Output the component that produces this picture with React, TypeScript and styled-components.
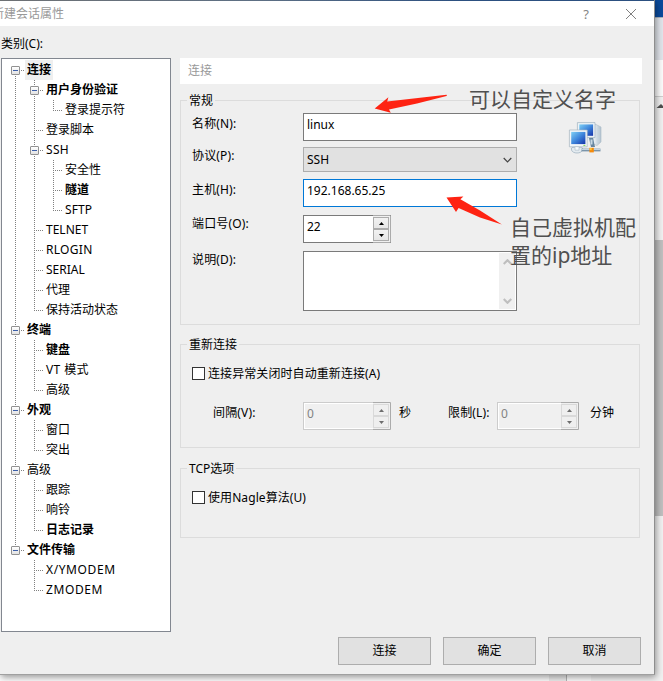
import React from "react";
import styled, { createGlobalStyle, css } from "styled-components";

const Global = createGlobalStyle`
  * { box-sizing: border-box; }
  body {
    margin: 0;
    overflow: hidden;
    background: #efefef;
    color: #000;
    font: 12px/16px "Noto Sans", "Noto Sans CJK SC", sans-serif;
  }
`;

/* ---------- desktop behind the dialog ---------- */

const Desktop = styled.div`
  position: relative;
  display: grid;
  grid-template: 675px 6px / 655px 8px;
  width: 663px;
  height: 681px;
  overflow: hidden;
`;

const SideStrip = styled.div`
  display: flex;
  flex-direction: column;
  grid-row: 1 / 3;
  grid-column: 2;
`;

const SideBlock = styled.div<{ $h: number; $bg: string; $line?: string }>`
  height: ${(p) => p.$h}px;
  background: ${(p) => p.$bg};
  border-bottom: ${(p) => (p.$line ? `1px solid ${p.$line}` : "none")};
`;

const BottomStrip = styled.div`
  display: flex;
  grid-row: 2;
  grid-column: 1;
`;

const BottomBlock = styled.div<{ $w: number; $bg: string }>`
  width: ${(p) => p.$w}px;
  background: ${(p) => p.$bg};
`;

/* ---------- dialog frame ---------- */

const Dialog = styled.div`
  z-index: 1;
  display: flex;
  flex-direction: column;
  grid-row: 1;
  grid-column: 1;
  background: #efefef;
  border-right: 1px solid #8e8e8e;
  border-bottom: 1px solid #a0a0a0;
  box-shadow: 1px 2px 7px rgba(0, 0, 0, 0.42);
`;

const TopEdge = styled.div`
  height: 1px;
  background: linear-gradient(90deg, #6e7174, #5d6f84 40%, #2c5080 70%, #2c5080);
`;

const TitleBar = styled.div`
  display: flex;
  align-items: center;
  height: 25px;
  background: #fff;
  color: #999;
`;

const Title = styled.span`
  flex: 1;
  margin-left: -8px;
  white-space: nowrap;
`;

const TitleButtons = styled.div`
  display: flex;
  align-items: center;
  gap: 35px;
  padding-right: 17px;
`;

const HelpMark = styled.span`
  width: 8px;
  font-size: 13px;
  color: #848484;
  text-align: center;
`;

const Body = styled.div`
  display: flex;
  height: 606px;
`;

const Footer = styled.div`
  display: flex;
  gap: 12px;
  justify-content: flex-end;
  padding: 5px 13px 0 0;
`;

const Button = styled.button`
  width: 93px;
  height: 28px;
  padding: 0;
  border: 1px solid #adadad;
  background: #e1e1e1;
  color: #000;
  font: inherit;
`;

/* ---------- category tree ---------- */

const Sidebar = styled.div`
  width: 180px;
  padding: 10px 0 0 1px;
`;

const TreeBox = styled.div`
  width: 170px;
  height: 574px;
  margin-top: 6px;
  padding: 1px 0 0 4px;
  border: 1px solid #828790;
  background: #fff;
`;

const TreeRow = styled.div`
  display: flex;
  height: 20px;
`;

type Guide = "none" | "pass" | "tee" | "end" | "start";

const vDots = "repeating-linear-gradient(180deg, #808080 0 1px, transparent 1px 2px)";
const hDots = "repeating-linear-gradient(90deg, #808080 0 1px, transparent 1px 2px)";

const guideStyles: Record<Guide, ReturnType<typeof css> | null> = {
  none: null,
  pass: css`background: ${vDots} 9px 0 / 1px 20px no-repeat;`,
  tee: css`background: ${vDots} 9px 0 / 1px 20px no-repeat, ${hDots} 9px 10px / 9px 1px no-repeat;`,
  end: css`background: ${vDots} 9px 0 / 1px 11px no-repeat, ${hDots} 9px 10px / 9px 1px no-repeat;`,
  start: css`background: ${vDots} 9px 10px / 1px 10px no-repeat, ${hDots} 9px 10px / 9px 1px no-repeat;`,
};

const GuideCell = styled.span<{ $kind: Guide }>`
  width: 19px;
  height: 20px;
  padding: 6px 0 0 5px;
  ${(p) => guideStyles[p.$kind]}
`;

const Expander = styled.span`
  display: flex;
  align-items: center;
  justify-content: center;
  width: 9px;
  height: 9px;
  border: 1px solid #919191;
  border-radius: 1px;
  background: linear-gradient(#fff, #e2e2e2);

  &::before {
    content: "";
    width: 5px;
    height: 1px;
    background: #3c5fa8;
  }
`;

const TreeLabel = styled.span<{ $bold?: boolean; $selected?: boolean; $spacing?: number }>`
  padding: 0 2px;
  line-height: 19px;
  white-space: nowrap;
  letter-spacing: ${(p) => p.$spacing ?? 0}px;
  font-weight: ${(p) => (p.$bold ? 700 : 400)};
  background: ${(p) => (p.$selected ? "#efefef" : "transparent")};
`;

interface Node {
  text: string;
  guides: Guide[];
  open?: boolean;
  bold?: boolean;
  selected?: boolean;
  spacing?: number;
}

const nodes: Node[] = [
  { text: "连接", guides: ["start"], open: true, bold: true, selected: true },
  { text: "用户身份验证", guides: ["pass", "tee"], open: true, bold: true },
  { text: "登录提示符", guides: ["pass", "pass", "end"] },
  { text: "登录脚本", guides: ["pass", "tee"] },
  { text: "SSH", guides: ["pass", "tee"], open: true, spacing: 0.3 },
  { text: "安全性", guides: ["pass", "pass", "tee"] },
  { text: "隧道", guides: ["pass", "pass", "tee"], bold: true },
  { text: "SFTP", guides: ["pass", "pass", "end"], spacing: 0.1 },
  { text: "TELNET", guides: ["pass", "tee"] },
  { text: "RLOGIN", guides: ["pass", "tee"], spacing: 0.3 },
  { text: "SERIAL", guides: ["pass", "tee"] },
  { text: "代理", guides: ["pass", "tee"] },
  { text: "保持活动状态", guides: ["pass", "end"] },
  { text: "终端", guides: ["tee"], open: true, bold: true },
  { text: "键盘", guides: ["pass", "tee"], bold: true },
  { text: "VT 模式", guides: ["pass", "tee"], spacing: 0.4 },
  { text: "高级", guides: ["pass", "end"] },
  { text: "外观", guides: ["tee"], open: true, bold: true },
  { text: "窗口", guides: ["pass", "tee"] },
  { text: "突出", guides: ["pass", "end"] },
  { text: "高级", guides: ["tee"], open: true },
  { text: "跟踪", guides: ["pass", "tee"] },
  { text: "响铃", guides: ["pass", "tee"] },
  { text: "日志记录", guides: ["pass", "end"], bold: true },
  { text: "文件传输", guides: ["end"], open: true, bold: true },
  { text: "X/YMODEM", guides: ["none", "tee"], spacing: 0.6 },
  { text: "ZMODEM", guides: ["none", "end"], spacing: 0.6 },
];

/* ---------- settings panel ---------- */

const Panel = styled.div`
  width: 462px;
  padding-top: 32px;
`;

const PanelHeader = styled.div`
  height: 26px;
  padding: 5px 8px;
  background: #fff;
  color: #999;
`;

const Group = styled.section<{ $h: number; $top: number }>`
  width: 460px;
  height: ${(p) => p.$h}px;
  margin-top: ${(p) => p.$top}px;
  padding-left: 11px;
  border: 1px solid #dcdcdc;
`;

const Legend = styled.h2`
  width: fit-content;
  height: 16px;
  margin: -8px 0 0 -5px;
  padding: 0 2px;
  background: #efefef;
  font: inherit;
`;

const Field = styled.div<{ $top: number }>`
  display: flex;
  margin-top: ${(p) => p.$top}px;
`;

const Label = styled.label<{ $w: number; $top?: number; $indent?: number }>`
  width: ${(p) => p.$w}px;
  padding: ${(p) => p.$top ?? 3}px 0 0 ${(p) => p.$indent ?? 0}px;
  white-space: nowrap;
  letter-spacing: 0.15px;
`;

const TextBox = styled.div<{ $focus?: boolean }>`
  width: 214px;
  height: 28px;
  padding: 3px 3px;
  border: 1px solid ${(p) => (p.$focus ? "#0078d7" : "#7a7a7a")};
  background: #fff;
`;

const Combo = styled.div`
  display: flex;
  align-items: center;
  justify-content: space-between;
  width: 214px;
  height: 25px;
  padding: 0 4px 0 3px;
  border: 1px solid #adadad;
  background: #e1e1e1;
`;

const TextArea = styled.div`
  display: flex;
  justify-content: flex-end;
  width: 214px;
  height: 60px;
  padding: 1px;
  border: 1px solid #7a7a7a;
  background: #fff;
`;

const ScrollTrack = styled.div`
  display: flex;
  flex-direction: column;
  align-items: center;
  justify-content: space-between;
  width: 16px;
  padding: 6px 0 5px;
  background: #f0f0f0;
`;

const SpinBox = styled.div<{ $w: number; $disabled?: boolean }>`
  display: flex;
  justify-content: space-between;
  width: ${(p) => p.$w}px;
  height: 28px;
  border: 1px solid ${(p) => (p.$disabled ? "#cccccc" : "#7a7a7a")};
  border-right-color: #ababab;
  background: ${(p) => (p.$disabled ? "#f0f0f0" : "#fff")};
  color: ${(p) => (p.$disabled ? "#838383" : "#000")};
  box-shadow: ${(p) => (p.$disabled ? "inset 0 0 0 1px #fff" : "none")};
`;

const SpinValue = styled.span`
  padding: 3px;
`;

const SpinButtons = styled.div`
  display: flex;
  flex-direction: column;
  width: 17px;
  margin: -1px 0;
  padding: 1px 1px 1px 0;
  border: solid #ababab;
  border-width: 1px 0;
  background: #f0f0f0;
`;

const SpinButton = styled.div<{ $disabled?: boolean }>`
  display: flex;
  flex: 1;
  align-items: center;
  justify-content: center;
  border: 1px solid ${(p) => (p.$disabled ? "#d9d9d9" : "#acacac")};
  background: ${(p) => (p.$disabled ? "#efefef" : "linear-gradient(#f2f2f2, #e6e6e6)")};
  color: ${(p) => (p.$disabled ? "#6d6d6d" : "#000")};
`;

const Unit = styled.span<{ $w: number; $left: number }>`
  width: ${(p) => p.$w}px;
  padding: 3px 0 0 ${(p) => p.$left}px;
`;

const CheckRow = styled.label<{ $top: number }>`
  display: flex;
  gap: 3px;
  align-items: flex-start;
  height: 16px;
  margin-top: ${(p) => p.$top}px;
  letter-spacing: 0.08px;
`;

const CheckBox = styled.span`
  width: 13px;
  height: 13px;
  margin-top: 1px;
  border: 1px solid #333;
  background: #fff;
`;

/* ---------- notes drawn over the dialog ---------- */

const Note = styled.div<{ $x: number; $y: number; $w: number }>`
  position: absolute;
  z-index: 3;
  left: ${(p) => p.$x}px;
  top: ${(p) => p.$y}px;
  width: ${(p) => p.$w}px;
  color: #505050;
  font-size: 21px;
  line-height: 28px;
`;

const Arrows = styled.svg`
  position: absolute;
  z-index: 2;
  left: 370px;
  top: 90px;
`;

const NetworkArt = styled.svg`
  position: absolute;
  z-index: 2;
  left: 568px;
  top: 121px;
`;

const Arrow = ({ up }: { up?: boolean }) => (
  <svg width="5" height="3" viewBox="0 0 5 3">
    <path d={up ? "M0 3h5L2.5 0z" : "M0 0h5L2.5 3z"} fill="currentColor" />
  </svg>
);

const Chevron = ({ up, color, stroke = 1.2 }: { up?: boolean; color: string; stroke?: number }) => (
  <svg width="9" height="6" viewBox="0 0 9 6">
    <path d={up ? "M.7 5 4.5 1.2 8.3 5" : "M.7 1 4.5 4.8 8.3 1"} fill="none" stroke={color} strokeWidth={stroke} />
  </svg>
);

const Spin = ({ w, value, disabled }: { w: number; value: string; disabled?: boolean }) => (
  <SpinBox $w={w} $disabled={disabled}>
    <SpinValue>{value}</SpinValue>
    <SpinButtons>
      <SpinButton $disabled={disabled}><Arrow up /></SpinButton>
      <SpinButton $disabled={disabled}><Arrow /></SpinButton>
    </SpinButtons>
  </SpinBox>
);

const NetworkIcon = () => (
  <NetworkArt width="34" height="34" viewBox="0 0 34 34">
    <defs>
      <linearGradient id="screen" x1="0" y1="0" x2="1" y2="1">
        <stop offset="0" stopColor="#7fd0f5" />
        <stop offset=".5" stopColor="#3f87dc" />
        <stop offset="1" stopColor="#1533a8" />
      </linearGradient>
      <linearGradient id="tower" x1="0" x2="1">
        <stop offset="0" stopColor="#f4f8fb" />
        <stop offset="1" stopColor="#aebfcd" />
      </linearGradient>
    </defs>
    <path d="M25 4 28 3.5l5 2.5v15L29 24.5l-4-1.5z" fill="url(#tower)" stroke="#b3c1cc" strokeWidth=".7" />
    <path d="M29.2 7v16M31 8v13" stroke="#c9d7e1" strokeWidth=".7" />
    <path d="M9.4 1.6H27v15H9.4z" fill="#edf3f7" stroke="#9eb0bf" strokeWidth=".7" />
    <path d="M11.3 3.4h13.8v11.4H11.3z" fill="url(#screen)" />
    <path d="M21 17h4l2 9h-4z" fill="#6686a0" />
    <path d="M22.5 18.5h2v5h-2z" fill="#c7d8e5" />
    <path d="M1.4 9h17.8v16.8H1.4z" fill="#f3f7f9" stroke="#a6b5c0" strokeWidth=".7" />
    <path d="M3.2 10.9h14.2v12.2H3.2z" fill="url(#screen)" />
    <path d="M15.4 24.4h2" stroke="#83d348" />
    <path d="M3.5 27c0-1 10-1.2 11 0v2c-1 4-10 4-11 0z" fill="#e4ebf0" stroke="#9aaebd" strokeWidth=".7" />
    <path d="M7 26v3.2h4v-3" fill="#f8fafb" stroke="#aabac6" strokeWidth=".6" />
    <path d="M13.5 29h19" stroke="#7b95aa" strokeWidth="2.8" />
    <path d="M13.5 28.5h19" stroke="#c4d4df" />
    <path d="M21.4 26.8h4.4v4.6h-4.4z" fill="#f58a0b" />
    <path d="M21.7 27.1h2v2h-2z" fill="#ffc93d" />
  </NetworkArt>
);

export default function App() {
  return (
    <Desktop>
      <Global />
      <Dialog>
        <TopEdge />
        <TitleBar>
          <Title>新建会话属性</Title>
          <TitleButtons>
            <HelpMark>?</HelpMark>
            <svg width="12" height="12" viewBox="0 0 12 12">
              <path d="M1 1l10 10M11 1 1 11" stroke="#808080" strokeWidth="1" />
            </svg>
          </TitleButtons>
        </TitleBar>
        <Body>
          <Sidebar>
            类别(C):
            <TreeBox>
              {nodes.map((n, i) => (
                <TreeRow key={i}>
                  {n.guides.map((g, j) => (
                    <GuideCell key={j} $kind={g}>
                      {n.open && j === n.guides.length - 1 && <Expander />}
                    </GuideCell>
                  ))}
                  <TreeLabel $bold={n.bold} $selected={n.selected} $spacing={n.spacing}>{n.text}</TreeLabel>
                </TreeRow>
              ))}
            </TreeBox>
          </Sidebar>
          <Panel>
            <PanelHeader>连接</PanelHeader>
            <Group $h={225} $top={16}>
              <Legend>常规</Legend>
              <Field $top={4}>
                <Label $w={111} $top={3}>名称(N):</Label>
                <TextBox>linux</TextBox>
              </Field>
              <Field $top={6}>
                <Label $w={111} $top={1}>协议(P):</Label>
                <Combo>SSH<Chevron color="#444" /></Combo>
              </Field>
              <Field $top={7}>
                <Label $w={111} $top={3}>主机(H):</Label>
                <TextBox $focus>192.168.65.25</TextBox>
              </Field>
              <Field $top={8}>
                <Label $w={111} $top={1}>端口号(O):</Label>
                <Spin w={88} value="22" />
              </Field>
              <Field $top={8}>
                <Label $w={111} $top={1}>说明(D):</Label>
                <TextArea>
                  <ScrollTrack>
                    <Chevron up color="#bfbfbf" stroke={2.2} />
                    <Chevron color="#bfbfbf" stroke={2.2} />
                  </ScrollTrack>
                </TextArea>
              </Field>
            </Group>
            <Group $h={104} $top={19}>
              <Legend>重新连接</Legend>
              <CheckRow $top={13}><CheckBox />连接异常关闭时自动重新连接(A)</CheckRow>
              <Field $top={20}>
                <Label $w={111} $indent={21}>间隔(V):</Label>
                <Spin w={88} value="0" disabled />
                <Unit $w={57} $left={8}>秒</Unit>
                <Label $w={49}>限制(L):</Label>
                <Spin w={82} value="0" disabled />
                <Unit $w={40} $left={11}>分钟</Unit>
              </Field>
            </Group>
            <Group $h={70} $top={20}>
              <Legend>TCP选项</Legend>
              <CheckRow $top={13}><CheckBox />使用Nagle算法(U)</CheckRow>
            </Group>
          </Panel>
        </Body>
        <Footer>
          <Button>连接</Button>
          <Button>确定</Button>
          <Button>取消</Button>
        </Footer>
      </Dialog>

      <SideStrip>
        <SideBlock $h={18} $bg="#0a4a9c" $line="#a9b3c0" />
        <SideBlock $h={42} $bg="#e1e5eb" />
        <SideBlock $h={37} $bg="#fbfbfb" $line="#cfcfcf" />
        <SideBlock $h={143} $bg="#f1f1f1">
          <svg width="8" height="14" viewBox="0 0 8 14">
            <path d="M1.5 11h7V9.5L6 7z" fill="#505050" />
          </svg>
        </SideBlock>
        <SideBlock $h={276} $bg="#c0c0c0" />
        <SideBlock $h={165} $bg="#f1f1f1" />
      </SideStrip>
      <BottomStrip>
        <BottomBlock $w={549} $bg="#fcfcfc" />
        <BottomBlock $w={17} $bg="#ececec" />
        <BottomBlock $w={1} $bg="#b5b5b5" />
        <BottomBlock $w={24} $bg="#fcfcfc" />
        <BottomBlock $w={64} $bg="#f1f1f1" />
      </BottomStrip>

      <NetworkIcon />
      <Arrows width="140" height="140" viewBox="370 90 140 140">
        <path d="M374.7 108.6 388.4 97.2 387.2 101.6 446.5 94.8Q447.4 95.4 446.5 96 L417 103.4 389 109.6 390.8 112.8z" fill="#fe2312" />
        <path d="M446.5 197.4 463.4 196.5 460.4 199.3 480 210.5 501.9 224.5 480 217.6 458.6 208 456 212z" fill="#fe2312" />
      </Arrows>
      <Note $x={469} $y={85} $w={160}>可以自定义名字</Note>
      <Note $x={510} $y={213} $w={130}>自己虚拟机配置的ip地址</Note>
    </Desktop>
  );
}
